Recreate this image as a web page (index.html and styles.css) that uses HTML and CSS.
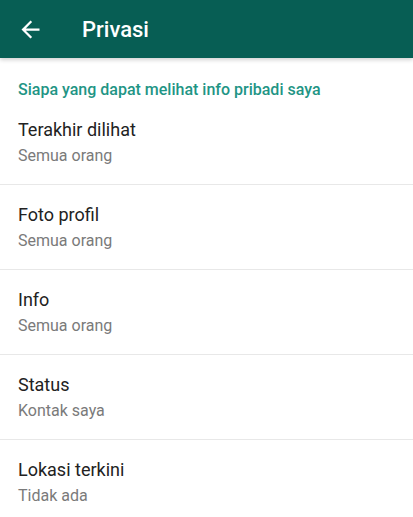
FILE: index.html
```html
<!DOCTYPE html>
<html lang="id">
<head>
    <meta charset="UTF-8">
    <meta name="viewport" content="width=device-width, initial-scale=1.0">
    <title>Privasi</title>
    <link rel="stylesheet" href="styles.css">
</head>
<body>
    <!-- Barra superior -->
    <header class="toolbar">
        <svg class="back-icon" viewBox="0 0 24 24" width="27" height="27">
            <path d="M20 11H7.83l5.59-5.59L12 4l-8 8 8 8 1.41-1.41L7.83 13H20v-2z" fill="#ffffff"/>
        </svg>
        <h1 class="toolbar-title">Privasi</h1>
    </header>

    <div class="section-title">Siapa yang dapat melihat info pribadi saya</div>

    <ul class="settings">
        <li class="setting">
            <div class="setting-name">Terakhir dilihat</div>
            <div class="setting-value">Semua orang</div>
        </li>
        <li class="setting">
            <div class="setting-name">Foto profil</div>
            <div class="setting-value">Semua orang</div>
        </li>
        <li class="setting">
            <div class="setting-name">Info</div>
            <div class="setting-value">Semua orang</div>
        </li>
        <li class="setting">
            <div class="setting-name">Status</div>
            <div class="setting-value">Kontak saya</div>
        </li>
        <li class="setting">
            <div class="setting-name">Lokasi terkini</div>
            <div class="setting-value">Tidak ada</div>
        </li>
    </ul>
</body>
</html>
```

FILE: styles.css
```css
body {
    font-family: Roboto, "Noto Sans", Arial, sans-serif;
    margin: 0;
    padding: 0;
    background: #ffffff;
    overflow: hidden;
    height: 100vh;
}

/* Barra superior verde */
.toolbar {
    display: flex;
    align-items: center;
    height: 58px;
    padding-left: 17px;
    background: #075e54;
    box-shadow: 0 2px 4px rgba(0, 0, 0, 0.18);
    position: relative;
}

.back-icon {
    display: block;
}

.toolbar-title {
    margin: 0 0 0 38px;
    font-size: 22px;
    font-weight: 500;
    color: #ffffff;
}

/* Titulo de la seccion */
.section-title {
    padding: 22px 18px 0;
    font-size: 16px;
    line-height: 20px;
    font-weight: 500;
    color: #1f9585;
}

.settings {
    list-style: none;
    margin: 0;
    padding: 0;
}

.setting {
    padding: 18px;
    border-bottom: 1px solid #e8e8e8;
}

.setting-name {
    font-size: 18px;
    line-height: 24px;
    color: #222222;
}

.setting-value {
    margin-top: 4px;
    font-size: 16px;
    line-height: 20px;
    color: #7a7a7a;
}
```
